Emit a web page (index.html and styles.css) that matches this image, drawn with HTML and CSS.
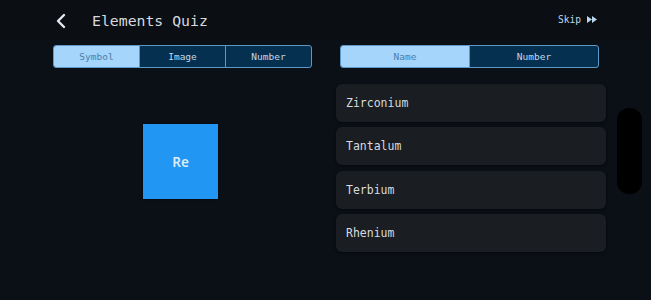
FILE: index.html
```
<!DOCTYPE html>
<html>
<head>
<meta charset="utf-8">
<link rel="stylesheet" href="styles.css">
</head>
<body>
<div class="app">
  <header class="header">
    <button class="back" aria-label="Back">
      <svg width="12" height="16" viewBox="0 0 12 16"><path d="M9 2 L3 8 L9 14" fill="none" stroke="#e6e9ee" stroke-width="2.4" stroke-linecap="round" stroke-linejoin="round"/></svg>
    </button>
    <h1 class="title">Elements Quiz</h1>
    <div class="skip">Skip
      <svg width="10" height="7" viewBox="0 0 10 7"><path d="M0 0 L5 3.5 L0 7 Z M5 0 L10 3.5 L5 7 Z" fill="#b9d6ee"/></svg>
    </div>
  </header>
  <div class="tabs">
    <div class="seg seg-left">
      <div class="opt active">Symbol</div>
      <div class="opt">Image</div>
      <div class="opt">Number</div>
    </div>
    <div class="seg seg-right">
      <div class="opt active">Name</div>
      <div class="opt">Number</div>
    </div>
  </div>
  <div class="content">
    <div class="left">
      <div class="tile">Re</div>
    </div>
    <div class="list">
      <div class="card">Zirconium</div>
      <div class="card">Tantalum</div>
      <div class="card">Terbium</div>
      <div class="card">Rhenium</div>
    </div>
  </div>
  <div class="pill"></div>
</div>
</body>
</html>
```
FILE: styles.css
```
* { box-sizing: border-box; }
html, body { margin: 0; padding: 0; }
body {
  width: 651px;
  height: 300px;
  background: #0b0f16;
  font-family: "DejaVu Sans Mono", "Liberation Mono", monospace;
  overflow: hidden;
}
.app { position: relative; width: 651px; height: 300px; }
.header {
  height: 40px;
  background: #0b0e13;
  display: flex;
  align-items: center;
  padding: 0 54px 0 55px;
}
.back {
  background: none;
  border: 0;
  padding: 0;
  width: 14px;
  height: 16px;
  display: flex;
  align-items: center;
  margin-top: 1px;
}
.title {
  margin: 0 0 0 23px;
  font-size: 14.8px;
  font-weight: normal;
  color: #d6dade;
  letter-spacing: 0;
  flex: 1;
}
.skip {
  font-size: 9.6px;
  color: #b9d6ee;
  display: flex;
  align-items: center;
  gap: 6px;
  margin-top: -1px;
}
.tabs {
  display: flex;
  padding: 5px 0 0 53px;
  gap: 28px;
}
.seg {
  display: flex;
  width: 259px;
  height: 23px;
  border: 1px solid #5f98c6;
  border-radius: 3px;
  overflow: hidden;
  background: #06304f;
}
.opt {
  flex: 1;
  display: flex;
  align-items: center;
  justify-content: center;
  font-size: 9.5px;
  color: #c3d9ec;
  border-left: 1px solid #5f98c6;
}
.opt:first-child { border-left: 0; }
.opt.active {
  background: #a6d5fb;
  color: #4b7ea9;
}
.content {
  display: flex;
  margin-top: 16px;
}
.left {
  width: 336px;
  padding: 40px 0 0 143px;
}
.tile {
  width: 75px;
  height: 75px;
  background: #2196f3;
  display: flex;
  align-items: center;
  justify-content: center;
  color: #dcecf9;
  font-family: "Noto Sans", "DejaVu Sans", sans-serif;
  font-weight: 600;
  font-size: 13.5px;
  box-shadow: 0 0 2px rgba(0,0,0,0.6);
}
.list {
  width: 270px;
  display: flex;
  flex-direction: column;
  gap: 5.4px;
}
.card {
  height: 38px;
  background: #1a1d21;
  border-radius: 6px;
  display: flex;
  align-items: center;
  padding-left: 10px;
  font-size: 11.5px;
  color: #d8dbdf;
  box-shadow: 0 1px 3px rgba(0,0,0,0.5);
}
.pill {
  position: absolute;
  left: 617px;
  top: 108px;
  width: 25px;
  height: 86px;
  background: #000;
  border-radius: 12px;
}
```
